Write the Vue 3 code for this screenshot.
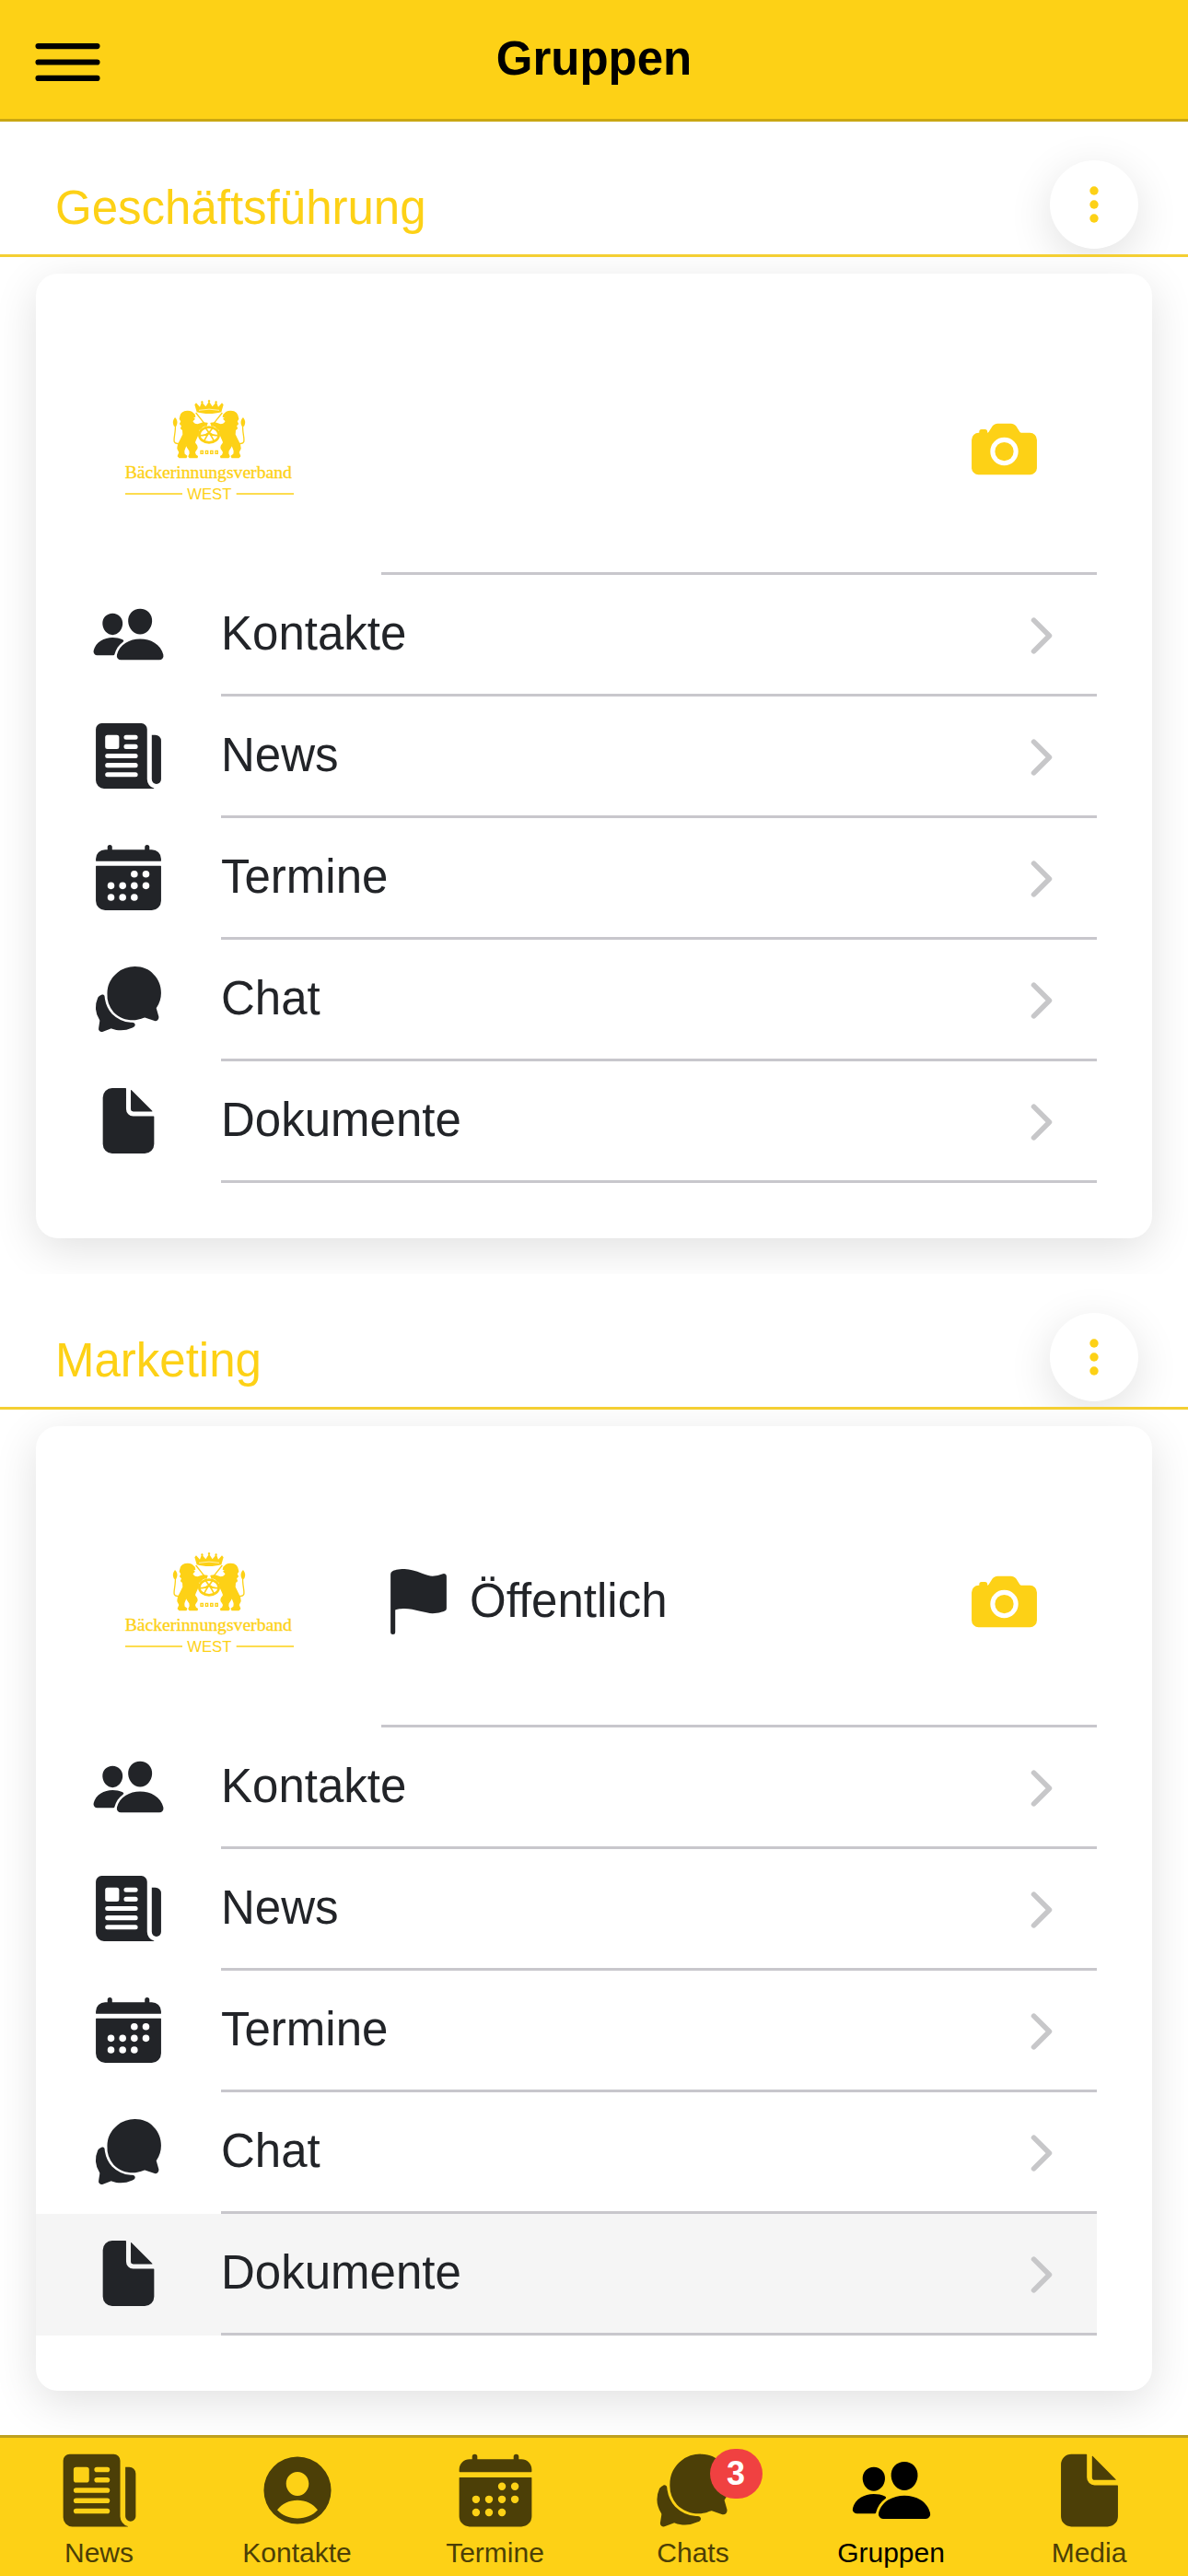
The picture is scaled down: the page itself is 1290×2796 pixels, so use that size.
<template>
  <div class="app">
    <header class="toolbar">
      <button class="menu-button" type="button" aria-label="Menü">
        <svg class="menu-icon" viewBox="0 0 512 512" aria-hidden="true">
          <path d="M80 160h352M80 256h352M80 352h352" />
        </svg>
      </button>
      <h1>Gruppen</h1>
    </header>

    <main class="content">
      <section v-for="group in groups" :key="group.name" class="group">
        <div class="group-header">
          <h2>{{ group.name }}</h2>
          <button class="fab" type="button" aria-label="Optionen">
            <svg class="fab-icon" viewBox="0 0 512 512" aria-hidden="true">
              <circle cx="256" cy="96" r="50" />
              <circle cx="256" cy="256" r="50" />
              <circle cx="256" cy="416" r="50" />
            </svg>
          </button>
        </div>

        <div class="card">
          <div class="hero">
            <svg class="logo" viewBox="0 0 720 450" role="img">
              <!-- crown -->
              <path d="M311 112L304 88L309 82L321 95L326 82L324 78L329 75L332 79L331 83L340 94L349 80L347 75L351 71L355 75L353 80L362 94L371 83L370 79L373 75L378 78L376 82L381 95L393 82L398 88L391 112C366 119 336 119 311 112Z" />
              <path class="logo-cut" d="M318 106Q351 99 384 106" />
              <!-- both lions, the right one mirrored -->
              <g v-for="side in lionSides" :key="side" :transform="side">
                <path class="logo-lion" d="M259 122C263 109 283 106 294 112L303 120L305 127L295 129L303 134L296 141C298 148 304 152 314 153L332 147L345 148L343 154L331 158L316 171C318 186 308 196 304 210C305 217 312 219 312 227C312 234 304 236 304 244L307 252L313 256L312 260L288 260L285 256L289 247L288 237L281 227L276 216C276 226 269 231 269 240L270 249L278 255L276 260L255 260L250 255L255 243L249 231C248 220 254 211 259 201L267 185L266 170L260 165L263 156L257 150L261 142L256 134Z" />
                <path class="logo-line" d="M253 214C224 219 244 188 241 154" />
                <path d="M240 129C248 137 250 147 244 158L237 158C231 147 233 138 240 129Z" />
                <path class="logo-line" d="M308 114L343 158" />
              </g>
              <!-- pretzel -->
              <ellipse class="logo-ring" cx="351" cy="186" rx="32" ry="25" />
              <path class="logo-twist" d="M339 163C345 171 361 190 367 207M363 163C357 171 341 190 335 207M322 187C334 190 342 186 351 178C360 186 368 190 380 187" />
              <path class="logo-line" d="M324 238h7v9h-7zM340 238h7v9h-7zM356 238h7v9h-7zM372 238h7v9h-7z" />
              <text class="logo-name" x="77" y="328">Bäckerinnungsverband</text>
              <path class="logo-rule" d="M78 378H264M440 378H627" />
              <text class="logo-region" x="352" y="397" text-anchor="middle">WEST</text>
            </svg>
            <div class="hero-body">
              <div v-if="group.isPublic" class="visibility">
                <svg class="icon" viewBox="0 0 512 512" aria-hidden="true"><path :d="icons.flag" /></svg>
                <span>Öffentlich</span>
              </div>
              <button class="camera" type="button" aria-label="Bild ändern">
                <svg class="icon" viewBox="0 0 512 512" aria-hidden="true">
                  <circle cx="256" cy="272" r="64" />
                  <path :d="icons.camera" />
                </svg>
              </button>
            </div>
          </div>

          <a
            v-for="entry in entries"
            :key="entry.label"
            href="#"
            class="row"
            :class="{ active: group.activeEntry === entry.label }"
          >
            <svg class="icon" viewBox="0 0 512 512" aria-hidden="true">
              <path :d="icons[entry.icon]" fill-rule="evenodd" />
            </svg>
            <span class="row-body">
              <span class="row-label">{{ entry.label }}</span>
              <svg class="chevron" viewBox="0 0 512 512" aria-hidden="true">
                <path d="M184 112l144 144-144 144" />
              </svg>
            </span>
          </a>
        </div>
      </section>
    </main>

    <nav class="tabs">
      <a
        v-for="tab in tabs"
        :key="tab.label"
        href="#"
        class="tab"
        :class="{ selected: tab.label === 'Gruppen' }"
      >
        <span class="tab-icon-wrap">
          <svg class="tab-icon" viewBox="0 0 512 512" aria-hidden="true">
            <path :d="icons[tab.icon]" fill-rule="evenodd" />
          </svg>
          <span v-if="tab.badge" class="badge">{{ tab.badge }}</span>
        </span>
        <span class="tab-label">{{ tab.label }}</span>
      </a>
    </nav>
  </div>
</template>

<script setup>
const groups = [
  { name: 'Geschäftsführung', isPublic: false },
  { name: 'Marketing', isPublic: true, activeEntry: 'Dokumente' }
]

const entries = [
  { label: 'Kontakte', icon: 'people' },
  { label: 'News', icon: 'newspaper' },
  { label: 'Termine', icon: 'calendar' },
  { label: 'Chat', icon: 'chat' },
  { label: 'Dokumente', icon: 'document' }
]

const tabs = [
  { label: 'News', icon: 'newspaper' },
  { label: 'Kontakte', icon: 'person' },
  { label: 'Termine', icon: 'calendar' },
  { label: 'Chats', icon: 'chat', badge: 3 },
  { label: 'Gruppen', icon: 'people' },
  { label: 'Media', icon: 'document' }
]

const lionSides = ['translate(0 0)', 'translate(702 0) scale(-1 1)']

const line = (x, y, width) =>
  `M${x + 16} ${y}h${width - 32}a16 16 0 010 32H${x + 16}a16 16 0 010-32z`

const dot = ([x, y]) => `M${x - 24} ${y}a24 24 0 1048 0a24 24 0 10-48 0z`

const calendarDots = [
  [296, 232], [376, 232],
  [136, 312], [216, 312], [296, 312], [376, 312],
  [136, 392], [216, 392], [296, 392]
]

const icons = {
  people:
    'M336 256c-20.56 0-40.44-9.18-56-25.84-15.13-16.25-24.37-37.92-26-61-1.74-24.62 5.77-47.26 21.14-63.76S312 80 336 80c23.83 0 45.38 9.06 60.7 25.52 15.47 16.62 23 39.22 21.26 63.63-1.67 23.11-10.9 44.77-26 61C376.44 246.82 356.57 256 336 256zM467.83 432H204.18a27.71 27.71 0 01-22-10.67 30.22 30.22 0 01-5.26-25.79c8.42-33.81 29.28-61.85 60.32-81.08C264.79 297.4 299.86 288 336 288c36.85 0 71 9 98.71 26.05 31.11 19.13 52 47.33 60.38 81.55a30.27 30.27 0 01-5.32 25.78A27.68 27.68 0 01467.83 432zM147 260c-35.19 0-66.13-32.72-69-72.93-1.42-20.6 5-39.65 18-53.62 12.86-13.83 31-21.45 51-21.45s38 7.66 50.93 21.57c13.1 14.08 19.5 33.09 18 53.52-2.87 40.2-33.8 72.91-68.93 72.91zM212.66 291.45c-17.59-8.6-40.42-12.9-65.65-12.9-29.46 0-58.07 7.68-80.57 21.62-25.51 15.83-42.67 38.88-49.6 66.71a27.39 27.39 0 004.79 23.36A25.32 25.32 0 0041.72 400h111a8 8 0 007.87-6.57c.11-.63.25-1.26.41-1.88 8.48-34.06 28.35-62.84 57.71-83.82a8 8 0 00-.63-13.39c-1.57-.92-3.37-1.89-5.42-2.89z',
  newspaper:
    'M439.91 112h-23.82a.09.09 0 00-.09.09V416a32 32 0 0064 0V152.09A40.09 40.09 0 00439.91 112zM384 416V72a40 40 0 00-40-40H72a40 40 0 00-40 40v352a56 56 0 0056 56h342.85a1.14 1.14 0 00.3-2.25A64.11 64.11 0 01384 416zM96 128a16 16 0 0116-16h64a16 16 0 0116 16v64a16 16 0 01-16 16h-64a16 16 0 01-16-16z' +
    line(224, 112, 96) + line(224, 176, 96) +
    line(96, 240, 224) + line(96, 304, 224) + line(96, 368, 224),
  calendar:
    'M480 128a64 64 0 00-64-64h-16V48a16 16 0 00-32 0v16H144V48a16 16 0 00-32 0v16H96a64 64 0 00-64 64v12a4 4 0 004 4h440a4 4 0 004-4zM32 416a64 64 0 0064 64h320a64 64 0 0064-64V179a3 3 0 00-3-3H35a3 3 0 00-3 3z' +
    calendarDots.map(dot).join(''),
  chat:
    'M439.9 405.6a26.77 26.77 0 01-9.59-2l-56.78-20.13-.42-.17a9.88 9.88 0 00-3.91-.76 10.32 10.32 0 00-3.62.66c-1.38.52-13.81 5.19-26.85 8.77-7.07 1.94-31.68 8.27-51.43 8.27-50.48 0-97.68-19.4-132.89-54.63A183.38 183.38 0 01110.3 215.1a175.9 175.9 0 014.06-37.58c8.79-40.62 32.07-77.57 65.55-104A194.76 194.76 0 01300.3 32c52.21 0 97 18 129 54.58 34.16 34.27 50.88 79.33 50.73 126.87a177.86 177.86 0 01-30.3 99.15l-.19.28-.74 1c-.17.23-.34.45-.5.68l-.15.27a21.63 21.63 0 00-1.08 2.09l15.74 55.94a26.42 26.42 0 011.12 7.11 24 24 0 01-24.03 25.63zM299.87 425.39a15.74 15.74 0 00-10.29-8.1c-5.78-1.53-12.52-1.27-17.67-1.65a201.78 201.78 0 01-128.82-58.75A199.21 199.21 0 0194.4 254.16C93 244.42 93 240 93 240a16 16 0 00-28-10.58s-15.88 8.58-19.6 17.19a162.09 162.09 0 0011 150.06C59 401 59 403 58.42 407.5l-6.7 43.91a24 24 0 005.16 23.31A24.34 24.34 0 0072 480a23.42 23.42 0 009-1.79l53.51-20.65a8.05 8.05 0 015.72 0c21.07 7.84 43 12 63.78 12a176 176 0 0074.91-16.66c5.46-2.56 14-5.34 19-11.12a15 15 0 001.95-16.39z',
  document:
    'M428 224H288a48 48 0 01-48-48V36a4 4 0 00-4-4h-92a64 64 0 00-64 64v320a64 64 0 0064 64h224a64 64 0 0064-64V228a4 4 0 00-4-4zM419.22 188.59L275.41 44.78a2 2 0 00-3.41 1.41V176a16 16 0 0016 16h129.81a2 2 0 001.41-3.41z',
  person:
    'M256 48a208 208 0 100 416 208 208 0 100-416zM256 142c39 0 70 32 70 73s-31 75-70 75-70-34-70-75 31-73 70-73zM131 377C160 338 205 317 256 317s96 21 125 60c-29 33-75 52-125 52s-96-19-125-52z',
  camera:
    'M432 144h-59c-3 0-6.72-1.94-9.62-5l-25.94-40.94a15.52 15.52 0 00-1.37-1.85C327.11 85.76 315 80 302 80h-92c-13 0-25.11 5.76-34.07 16.21a15.52 15.52 0 00-1.37 1.85l-25.94 41c-2.22 2.42-5.34 5-8.62 5v-8a16 16 0 00-16-16h-24a16 16 0 00-16 16v8h-4a48.05 48.05 0 00-48 48V384a48.05 48.05 0 0048 48h352a48.05 48.05 0 0048-48V192a48.05 48.05 0 00-48-48zM256 368a96 96 0 1196-96 96.11 96.11 0 01-96 96z',
  flag:
    'M80 480a16 16 0 01-16-16V68.13a24 24 0 0111.88-20.6C88.44 40.18 112.38 32 160 32c37.21 0 78.83 14.71 115.55 27.68C305.12 70.13 333.05 80 352 80a183.84 183.84 0 0071.05-14.5 18 18 0 0124.95 16.6v219.25a20 20 0 01-12 18.31c-8.71 3.81-40.51 16.34-84 16.34-24.14 0-54.38-7.14-86.39-14.71C229.63 312.79 192.43 304 160 304c-36.87 0-55.74 5.58-64 9.11V464a16 16 0 01-16 16z'
}
</script>

<style>
body {
  margin: 0;
  background: #fff;
}
</style>

<style scoped>
.app {
  display: flex;
  flex-direction: column;
  min-height: 100vh;
  font-family: 'Liberation Sans', Arial, sans-serif;
  font-size: 51px;
  line-height: 60px;
  color: #222428;
}

.app * {
  box-sizing: border-box;
}

button {
  display: flex;
  align-items: center;
  justify-content: center;
  padding: 0;
  border: none;
  background: none;
  color: inherit;
  cursor: pointer;
}

a {
  color: inherit;
  text-decoration: none;
}

svg {
  display: block;
  flex-shrink: 0;
  fill: currentColor;
}

.toolbar {
  display: grid;
  grid-template-columns: 120px 1fr 120px;
  align-items: center;
  height: 132px;
  border-bottom: 3px solid #caa712;
  background: #fdd116;
  color: #000;
}

.toolbar h1 {
  margin: 0;
  padding-bottom: 2px;
  font-size: 51px;
  font-weight: 700;
  text-align: center;
}

.menu-button {
  justify-content: flex-end;
  padding-top: 6px;
}

.menu-icon {
  width: 93px;
  height: 93px;
  fill: none;
  stroke: currentColor;
  stroke-width: 34;
  stroke-linecap: round;
}

.content {
  flex: 1;
}

.group-header {
  position: relative;
  z-index: 1;
  display: flex;
  align-items: flex-end;
  justify-content: space-between;
  height: 147px;
  padding: 0 54px 6px 60px;
  overflow: hidden;
  border-bottom: 3px solid #f4cf33;
  background: #fff;
  color: #fdd116;
}

.group-header h2 {
  margin: 0 0 14px;
  font-size: 51px;
  font-weight: 400;
}

.fab {
  width: 96px;
  height: 96px;
  border-radius: 50%;
  background: #fff;
  box-shadow: 0 12px 48px rgba(0, 0, 0, 0.12);
}

.fab-icon {
  width: 48px;
  height: 48px;
}

.card {
  margin: 18px 39px 39px;
  padding: 57px 0 60px;
  border-radius: 24px;
  background: #fff;
  box-shadow: 0 12px 48px rgba(0, 0, 0, 0.12);
}

.hero {
  display: flex;
  align-items: center;
  height: 270px;
  margin-right: 60px;
  padding-left: 71px;
}

.logo {
  width: 240px;
  height: 150px;
  margin: 0 64px 8px 0;
  color: #fdd116;
}

.logo-cut {
  fill: none;
  stroke: #fff;
  stroke-width: 2;
}

.logo-lion {
  stroke: currentColor;
  stroke-width: 4;
  stroke-linejoin: round;
}

.logo-line,
.logo-ring,
.logo-twist,
.logo-rule {
  fill: none;
  stroke: currentColor;
  stroke-width: 4;
}

.logo-ring {
  stroke-width: 8;
}

.logo-twist {
  stroke-width: 5;
}

.logo-name {
  font-family: 'Liberation Serif', 'Times New Roman', serif;
  font-size: 59px;
  stroke: currentColor;
  stroke-width: 1;
}

.logo-region {
  font-family: 'Liberation Sans Narrow', 'Arial Narrow', 'Liberation Sans', sans-serif;
  font-size: 50px;
}

.hero-body {
  display: flex;
  flex: 1;
  align-items: center;
  align-self: stretch;
  border-bottom: 3px solid #c8c7cc;
  padding-right: 60px;
}

.visibility {
  display: flex;
  align-items: center;
  gap: 15px;
}

.visibility span,
.row-label {
  padding-bottom: 2px;
}

.camera {
  margin-left: auto;
  color: #fdd116;
}

.icon {
  width: 81px;
  height: 81px;
}

.row {
  display: flex;
  align-items: stretch;
  gap: 60px;
  height: 132px;
  margin-right: 60px;
  padding-left: 60px;
}

.row.active {
  background: #f5f5f5;
}

.row > .icon {
  margin-top: 24px;
}

.row-body {
  display: flex;
  flex: 1;
  align-items: center;
  justify-content: space-between;
  padding-right: 30px;
  border-bottom: 3px solid #c8c7cc;
}

.chevron {
  width: 60px;
  height: 60px;
  margin-top: 3px;
  fill: none;
  stroke: #c7c7c9;
  stroke-width: 48;
  stroke-linecap: round;
  stroke-linejoin: round;
}

.tabs {
  position: sticky;
  bottom: 0;
  z-index: 2;
  display: grid;
  grid-template-columns: repeat(6, 1fr);
  height: 153px;
  border-top: 3px solid #bea01f;
  background: #fdd116;
}

.tab {
  display: flex;
  flex-direction: column;
  align-items: center;
  padding-top: 12px;
  color: #4c3f07;
}

.tab.selected {
  color: #000;
}

.tab-icon-wrap {
  position: relative;
}

.tab-icon {
  width: 90px;
  height: 90px;
}

.tab-label {
  margin-top: 5px;
  font-size: 30px;
  line-height: 36px;
}

.badge {
  position: absolute;
  top: 0;
  left: 63px;
  min-width: 57px;
  height: 54px;
  border-radius: 27px;
  background: #f04141;
  color: #fff;
  font-size: 36px;
  font-weight: 700;
  line-height: 54px;
  text-align: center;
}
</style>
